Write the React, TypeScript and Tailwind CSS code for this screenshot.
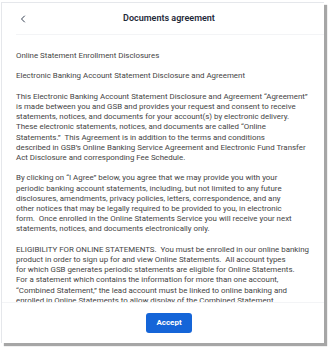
import { ChevronLeft } from "lucide-react";

const paragraphs = [
  "Online Statement Enrollment Disclosures",
  "Electronic Banking Account Statement Disclosure and Agreement",
  "This Electronic Banking Account Statement Disclosure and Agreement \u201cAgreement\u201d\nis made between you and GSB and provides your request and consent to receive\nstatements, notices, and documents for your account(s) by electronic delivery.\nThese electronic statements, notices, and documents are called \u201cOnline\nStatements.\u201d  This Agreement is in addition to the terms and conditions\ndescribed in GSB\u2019s Online Banking Service Agreement and Electronic Fund Transfer\nAct Disclosure and corresponding Fee Schedule.",
  "By clicking on \u201cI Agree\u201d below, you agree that we may provide you with your\nperiodic banking account statements, including, but not limited to any future\ndisclosures, amendments, privacy policies, letters, correspondence, and any\nother notices that may be legally required to be provided to you, in electronic\nform.  Once enrolled in the Online Statements Service you will receive your next\nstatements, notices, and documents electronically only.",
  "ELIGIBILITY FOR ONLINE STATEMENTS.  You must be enrolled in our online banking\nproduct in order to sign up for and view Online Statements.  All account types\nfor which GSB generates periodic statements are eligible for Online Statements.\nFor a statement which contains the information for more than one account,\n\u201cCombined Statement,\u201d the lead account must be linked to online banking and\nenrolled in Online Statements to allow display of the Combined Statement.",
];

export default function App() {
  return (
    <div className="w-[331px] h-[350px] bg-white pt-[2px] pl-[1px] font-['Roboto',sans-serif]">
      <div className="w-[323px] h-[341px] bg-white border-t border-l border-gray-200 shadow-[3px_3px_1px_rgba(0,0,0,0.35)] flex flex-col">
        <div className="relative h-[31px] flex items-center justify-center pl-[12px]">
          <ChevronLeft className="absolute left-[15px] top-[10px] text-gray-700" size={12} strokeWidth={2} />
          <h1 className="text-[9px] font-semibold text-gray-800">Documents agreement</h1>
        </div>
        <div className="ml-[14px] border-t border-gray-100" />
        <div className="flex-1 overflow-hidden pl-[14px] pr-[4px] pt-[16px] text-[7.9px] leading-[10.2px] text-[#444]">
          {paragraphs.map((p, i) => (
            <p key={i} className="mb-[10.2px] whitespace-pre">
              {p}
            </p>
          ))}
        </div>
        <div className="border-t border-gray-100 h-[41px] flex items-center justify-center pl-[12px]">
          <button className="bg-[#1565d8] text-white text-[8px] font-bold rounded-[3px] w-[46px] h-[20px]">
            Accept
          </button>
        </div>
      </div>
    </div>
  );
}
